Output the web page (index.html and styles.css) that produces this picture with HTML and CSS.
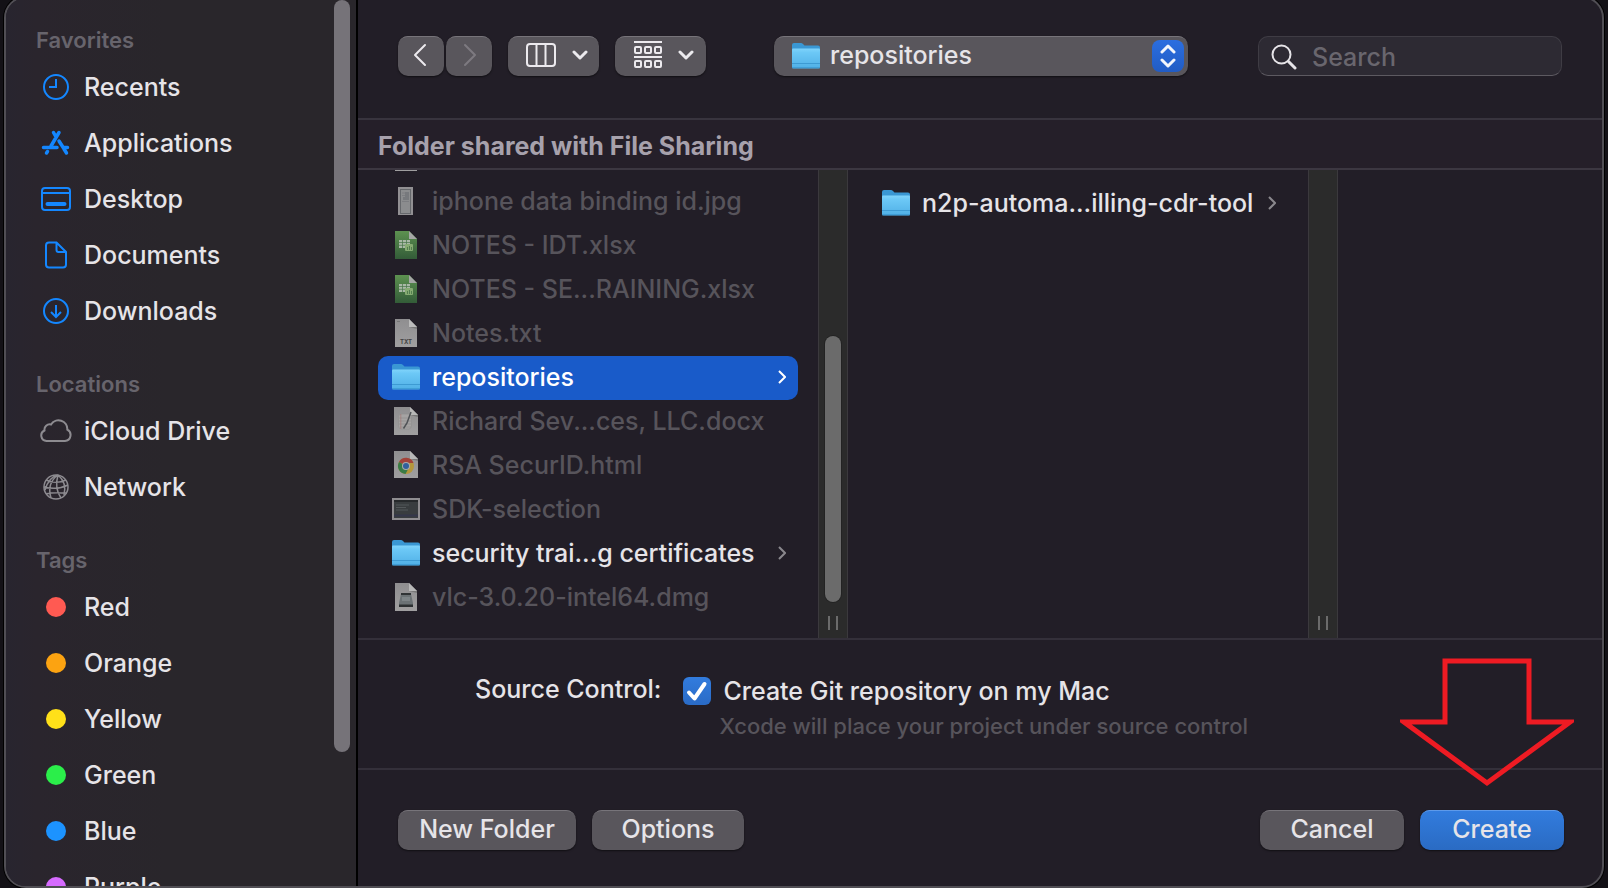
FILE: index.html
```html
<!DOCTYPE html>
<html lang="en">
<head>
<meta charset="utf-8">
<title>Save project</title>
<link rel="stylesheet" href="styles.css">
</head>
<body>
<svg class="defs" aria-hidden="true">
  <defs>
    <linearGradient id="folder-front" x1="0" y1="0" x2="0" y2="1"><stop offset="0" stop-color="#7fd3fb"/><stop offset=".2" stop-color="#6cc8f6"/><stop offset="1" stop-color="#50b0e6"/></linearGradient>
    <linearGradient id="sheet-green" x1="0" y1="0" x2="0" y2="1"><stop offset="0" stop-color="#5d9150"/><stop offset="1" stop-color="#335c38"/></linearGradient>
    <linearGradient id="paper" x1="0" y1="0" x2="0" y2="1"><stop offset="0" stop-color="#8f8e90"/><stop offset="1" stop-color="#a09fa0"/></linearGradient>
    <symbol id="folder" viewBox="0 0 28 28">
      <path d="M0 3q0-2 2-2h7q1 0 2 1l1.500 1.500H26q2 0 2 2V12H0z" fill="#3a97d3"/>
      <path d="M0 7.500q0-1 1-1h26q1 0 1 1V25q0 1.500-1.500 1.500h-25Q0 26.500 0 25z" fill="url(#folder-front)"/>
      <path d="M0 21.500h28M0 25.700h28" stroke="#3d9bd3" stroke-width="1"/>
    </symbol>
    <symbol id="sheet" viewBox="0 0 28 28">
      <path d="M3 0h14l8 8v20H3z" fill="url(#sheet-green)"/><path d="M17 0v8h8z" fill="#a5a7a5"/>
      <path d="M7 9h11v8H7z" fill="#a9b8a6"/><path d="M7 11.500h11M7 14.300h11M10.500 9v8M14.500 9v8" stroke="#467447" stroke-width=".7"/>
      <rect x="13" y="13" width="8" height="7" rx="1" fill="#86ab72"/><path d="M15.500 19v-3M17.500 19v-4M19.500 19v-3" stroke="#467447" stroke-width=".8"/>
    </symbol>
    <symbol id="txt" viewBox="0 0 28 28">
      <path d="M3 0h14l8 8v20H3z" fill="url(#paper)"/><path d="M17 0v8h8z" fill="#bbb"/><path d="M17 8h8v2z" fill="#777"/>
      <path d="M5 2.500h3" stroke="#666" stroke-width=".6"/>
    </symbol>
    <symbol id="phone" viewBox="0 0 28 28">
      <path d="M6 0h15v28H6z" fill="#929093"/><rect x="8.500" y="2.500" width="10" height="24" fill="#8b8c8e" stroke="#66686c"/>
      <path d="M10 6h4M10 8.500h3M10 14.500h7" stroke="#787a7e" stroke-width=".8"/><path d="M13 5h4v8h-6v-3h2z" fill="#77797d"/>
    </symbol>
    <symbol id="docx" viewBox="0 0 28 28">
      <path d="M2 0h16l8 8v20H2z" fill="url(#paper)"/><path d="M18 0v8h8z" fill="#b8b8b8"/><path d="M18 8h8v2z" fill="#777"/>
      <rect x="6.500" y="7" width="13" height="15" rx="3" fill="#a5a3a3" stroke="#918f8f" stroke-width=".7"/><path d="M7 11h12M7 14h12M7 17h12M8 20h11" stroke="#8b8989" stroke-width=".6"/>
      <path d="M8.800 7v15" stroke="#a5706f" stroke-width=".6"/><path d="M19 5l-4 11-3.500 5.500" stroke="#4f5256" stroke-width="1.500"/>
    </symbol>
    <symbol id="chrome" viewBox="0 0 28 28">
      <path d="M2 0h16l8 8v19H2z" fill="url(#paper)"/><path d="M18 0v8h8z" fill="#b8b8b8"/><path d="M18 8h8v2z" fill="#777"/>
      <circle cx="14" cy="15" r="8" fill="#b5973b"/><path d="M14 15L7 11A8 8 0 0 1 21.500 12H14z" fill="#a2423a"/>
      <path d="M7 11a8 8 0 0 0 6.500 12l3.500-6.500-3 .5z" fill="#397b46"/><path d="M7 11l4 6.500 3-2.500z" fill="#397b46"/>
      <circle cx="14" cy="15" r="4" fill="#aaa"/><circle cx="14" cy="15" r="3" fill="#32609d"/>
    </symbol>
    <symbol id="shot" viewBox="0 0 28 28">
      <rect x="1" y="4" width="26" height="20" fill="#393d3f" stroke="#8f8d90" stroke-width="2"/><path d="M2 6h24" stroke="#26292b" stroke-width="2"/>
      <path d="M4 10h13M4 12.500h10M4 15h12" stroke="#53585a" stroke-width="1"/><path d="M2 20.500h24" stroke="#34374a" stroke-width="2"/>
    </symbol>
    <symbol id="dmg" viewBox="0 0 28 28">
      <path d="M3 0h14l8 8v20H3z" fill="url(#paper)"/><path d="M17 0v8h8z" fill="#b8b8b8"/><path d="M17 8h8v2z" fill="#777"/>
      <path d="M9 11h10l2 9v4H7v-4z" fill="#6b7275"/><path d="M9 11h10" stroke="#2f3335" stroke-width="2"/><path d="M7 21.500h14v2.500H7z" fill="#2c3032"/><path d="M10 14h8v4h-8z" fill="#7d8487"/>
    </symbol>
    <symbol id="chev" viewBox="0 0 8 14"><path d="M1 1l6 6-6 6" fill="none" stroke="currentColor" stroke-width="2"/></symbol>
    <symbol id="down" viewBox="0 0 16 12"><path d="M2 3l6 6 6-6" fill="none" stroke="currentColor" stroke-width="3" stroke-linecap="round" stroke-linejoin="round"/></symbol>
  </defs>
</svg>

<main class="window">
  <nav class="sidebar" aria-label="Places">
    <div class="places">
      <section class="group">
        <h2>Favorites</h2>
        <ul>
          <li><a href="#recents"><svg viewBox="0 0 32 32"><circle cx="16" cy="16" r="12"/><path d="M16 8v8H9"/></svg>Recents</a></li>
          <li><a href="#applications"><svg viewBox="0 0 32 32"><path d="M13.500 5.500L15.500 9M19 5.500L11 19M19 14l4.500 7M3.500 20.500H17M23.500 20.500H27.500M7.500 24.500L6.500 26M24 22l2.500 4" stroke-linecap="round" stroke-width="3.500"/></svg>Applications</a></li>
          <li><a href="#desktop"><svg viewBox="0 0 32 32"><rect x="2" y="5" width="28" height="22" rx="3"/><path d="M2 10h28"/><path d="M7.500 21h17" stroke-width="4" stroke-linecap="round"/></svg>Desktop</a></li>
          <li><a href="#documents"><svg viewBox="0 0 32 32"><path d="M16.500 3.500H9a3 3 0 0 0-3 3v19a3 3 0 0 0 3 3h14a3 3 0 0 0 3-3V13zM16.500 3.500V11a2 2 0 0 0 2 2H26"/></svg>Documents</a></li>
          <li><a href="#downloads"><svg viewBox="0 0 32 32"><circle cx="16" cy="16" r="12"/><path d="M16 10v11M11 17l5 5 5-5"/></svg>Downloads</a></li>
        </ul>
      </section>
      <section class="group gray">
        <h2>Locations</h2>
        <ul>
          <li><a href="#icloud"><svg viewBox="0 0 32 32"><path d="M6.500 26H25a6 6 0 0 0 2.300-11.300A8.800 8.800 0 0 0 11 9.500a5.300 5.300 0 0 0-6.500 6A5.500 5.500 0 0 0 6.500 26z"/></svg>iCloud Drive</a></li>
          <li><a href="#network"><svg viewBox="0 0 32 32" class="thin"><circle cx="16" cy="16" r="12"/><path d="M18 4c-7 5-10 13-7 23M18 4c-2 7-2 16 3 23M18 4c6 5 8 12 6 20M18 4C13 5 8 9 5 19M6 9c6 3 14 3 20 0M4 16c8 2 16 2 24-2M6 23c6-2 14-1 21-1"/></svg>Network</a></li>
        </ul>
      </section>
      <section class="group">
        <h2>Tags</h2>
        <ul>
          <li><a href="#red"><i class="dot red"></i>Red</a></li>
          <li><a href="#orange"><i class="dot orange"></i>Orange</a></li>
          <li><a href="#yellow"><i class="dot yellow"></i>Yellow</a></li>
          <li><a href="#green"><i class="dot green"></i>Green</a></li>
          <li><a href="#blue"><i class="dot blue"></i>Blue</a></li>
          <li><a href="#purple"><i class="dot purple"></i>Purple</a></li>
        </ul>
      </section>
    </div>
    <div class="side-thumb"></div>
  </nav>

  <div class="content">
    <header class="toolbar">
      <div class="history">
        <button class="btn" aria-label="Back"><svg class="ic-nav" viewBox="0 0 16 24"><path d="M12 2L2 12l10 10"/></svg></button>
        <button class="btn" aria-label="Forward" disabled><svg class="ic-nav" viewBox="0 0 16 24"><path d="M4 2l10 10L4 22"/></svg></button>
      </div>
      <button class="btn view" aria-label="Column view"><svg class="ic-view" viewBox="0 0 30 28"><rect x="1" y="3" width="28" height="22" rx="3"/><path d="M10.500 3v22M19.500 3v22"/></svg><svg class="ic-down"><use href="#down"/></svg></button>
      <button class="btn view" aria-label="Group items"><svg class="ic-view group-ic" viewBox="0 0 28 28"><path d="M0 1h28M0 16h28"/><g><rect x="1" y="6" width="6" height="6" rx="1"/><rect x="11" y="6" width="6" height="6" rx="1"/><rect x="21" y="6" width="6" height="6" rx="1"/><rect x="1" y="20" width="6" height="6" rx="1"/><rect x="11" y="20" width="6" height="6" rx="1"/><rect x="21" y="20" width="6" height="6" rx="1"/></g></svg><svg class="ic-down"><use href="#down"/></svg></button>
      <div class="popup">
        <svg class="ic-file"><use href="#folder"/></svg>
        <select aria-label="Current folder"><option>repositories</option></select>
        <span class="stepper"><svg viewBox="0 0 16 24"><path d="M2 8l6-6 6 6M2 16l6 6 6-6"/></svg></span>
      </div>
      <label class="search">
        <svg viewBox="0 0 26 26"><circle cx="10.500" cy="10.500" r="9"/><path d="M17.500 17.500L24 24" stroke-width="3"/></svg>
        <input type="search" placeholder="Search" aria-label="Search">
      </label>
    </header>

    <h1 class="banner">Folder shared with File Sharing</h1>

    <div class="columns">
      <ul class="col files">
        <li><button class="row" disabled aria-label="Earlier file"><svg class="ic-file"><use href="#txt"/></svg></button></li>
        <li><button class="row" disabled><svg class="ic-file"><use href="#phone"/></svg><span>iphone data binding id.jpg</span></button></li>
        <li><button class="row" disabled><svg class="ic-file"><use href="#sheet"/></svg><span>NOTES - IDT.xlsx</span></button></li>
        <li><button class="row" disabled><svg class="ic-file"><use href="#sheet"/></svg><span>NOTES - SE...RAINING.xlsx</span></button></li>
        <li><button class="row" disabled><span class="txt-ic"><svg class="ic-file"><use href="#txt"/></svg><small>TXT</small></span><span>Notes.txt</span></button></li>
        <li><button class="row selected"><svg class="ic-file"><use href="#folder"/></svg><span>repositories</span><svg class="ic-chev"><use href="#chev"/></svg></button></li>
        <li><button class="row" disabled><svg class="ic-file"><use href="#docx"/></svg><span>Richard Sev...ces, LLC.docx</span></button></li>
        <li><button class="row" disabled><svg class="ic-file"><use href="#chrome"/></svg><span>RSA SecurID.html</span></button></li>
        <li><button class="row" disabled><svg class="ic-file"><use href="#shot"/></svg><span>SDK-selection</span></button></li>
        <li><button class="row"><svg class="ic-file"><use href="#folder"/></svg><span>security trai...g certificates</span><svg class="ic-chev"><use href="#chev"/></svg></button></li>
        <li><button class="row" disabled><svg class="ic-file"><use href="#dmg"/></svg><span>vlc-3.0.20-intel64.dmg</span></button></li>
      </ul>
      <div class="gutter"><div class="thumb"></div><div class="grip"></div></div>
      <ul class="col">
        <li><button class="row"><svg class="ic-file"><use href="#folder"/></svg><span>n2p-automa...illing-cdr-tool</span><svg class="ic-chev"><use href="#chev"/></svg></button></li>
      </ul>
      <div class="gutter"><div class="grip"></div></div>
      <div class="rest"></div>
    </div>

    <section class="source">
      <span class="source-label">Source Control:</span>
      <div class="source-field">
        <label class="check"><span class="box"><input type="checkbox" checked><svg viewBox="0 0 28 28"><path d="M6 15.500l5.500 6L21.500 7"/></svg></span>Create Git repository on my Mac</label>
        <p>Xcode will place your project under source control</p>
      </div>
    </section>

    <footer class="actions">
      <button class="btn wide">New Folder</button>
      <button class="btn mid">Options</button>
      <span class="space"></span>
      <button class="btn end">Cancel</button>
      <button class="btn end primary">Create</button>
    </footer>
  </div>

  <svg class="arrow" viewBox="0 0 174 130" aria-hidden="true"><path d="M45 3h84v61h41L87 125 4 64h41z"/></svg>
</main>
</body>
</html>
```
FILE: styles.css
```css
* { box-sizing: border-box; }

body {
  margin: 0;
  height: 100vh;
  overflow: hidden;
  background: #131116;
  color: #e6e4e8;
  font: 500 25px/32px Inter, "Liberation Sans", sans-serif;
}

button, input, select { font: inherit; color: inherit; }
button { border: 0; padding: 0; background: none; }
ul { list-style: none; margin: 0; padding: 0; }
svg { display: block; flex: none; fill: none; }
.defs { position: absolute; width: 0; height: 0; }

.window {
  position: relative;
  display: flex;
  height: calc(100vh + 4px);
  margin: -4px 4px 0;
  border: 2px solid #504e54;
  border-radius: 22px;
  box-shadow: 0 0 0 1px #000;
  background: #221e27;
  overflow: hidden;
}

/* Sidebar */
.sidebar {
  display: flex;
  justify-content: space-between;
  width: 352px;
  flex: none;
  padding: 2px 6px 0 0;
  border-right: 2px solid #000;
  background: linear-gradient(90deg, #28252f 0, #2a252d 30px, #29262b 160px);
  overflow: hidden;
}
.places { padding: 23px 0 0 30px; }
.group { margin-bottom: 28px; }
.group h2 {
  margin: 0;
  height: 36px;
  color: #67646c;
  font-size: 22px;
  line-height: 34px;
  font-weight: 600;
}
.group a {
  display: flex;
  align-items: center;
  gap: 12px;
  height: 56px;
  padding-left: 4px;
  color: inherit;
  text-decoration: none;
}
.group a svg { width: 32px; height: 32px; stroke: #1487ff; stroke-width: 2; }
.group.gray a svg { stroke: #8d8b90; }
.group a .thin, .group.gray a .thin { stroke-width: 1.5; }
.dot { width: 20px; height: 20px; margin: 0 6px; border-radius: 50%; }
.red { background: #ff5a52; }
.orange { background: #fca311; }
.yellow { background: #ffe019; }
.green { background: #2bee4a; }
.blue { background: #1c93ff; }
.purple { background: #d66bff; }
.side-thumb { width: 16px; height: 752px; border-radius: 8px; background: #767379; }

/* Content */
.content { display: flex; flex-direction: column; flex: 1; min-width: 0; padding-top: 2px; }

.btn {
  height: 40px;
  border-radius: 10px;
  background: #59565c;
  box-shadow: inset 0 2px 0 -1px #77747a, 0 1px 2px #0008;
  text-align: center;
  line-height: 38px;
  padding-bottom: 2px;
}
.toolbar {
  display: flex;
  align-items: flex-start;
  height: 120px;
  padding: 36px 40px 0;
  border-bottom: 2px solid #38343e;
}
.history { display: flex; gap: 2px; }
.toolbar .btn { display: flex; align-items: center; justify-content: center; width: 46px; padding: 0 0 2px; }
.ic-nav { width: 16px; height: 24px; stroke: #eceaee; stroke-width: 2; stroke-linecap: round; stroke-linejoin: round; }
.btn:disabled .ic-nav { stroke: #7d7a80; }
.toolbar .view { width: 91px; gap: 16px; margin-left: 16px; padding-left: 6px; }
.ic-view { width: 30px; height: 28px; stroke: #eceaee; stroke-width: 2; }
.group-ic { width: 28px; }
.ic-down { width: 16px; height: 12px; color: #eceaee; }
.popup {
  display: flex;
  align-items: center;
  flex: 1;
  min-width: 0;
  height: 40px;
  margin: 0 70px 0 68px;
  padding: 0 4px 0 18px;
  border-radius: 10px;
  background: #59565c;
  box-shadow: inset 0 2px 0 -1px #77747a, 0 1px 2px #0008;
}
.popup select {
  flex: 1;
  min-width: 0;
  height: 38px;
  margin-bottom: 2px;
  padding: 0 0 0 10px;
  border: 0;
  background: none;
  appearance: none;
}
.stepper {
  display: grid;
  place-items: center;
  width: 32px;
  height: 32px;
  border-radius: 8px;
  background: linear-gradient(#2b6ee0, #215cc4);
}
.stepper svg { width: 16px; height: 24px; stroke: #f2f5fb; stroke-width: 3; stroke-linecap: round; stroke-linejoin: round; }
.search {
  display: flex;
  align-items: center;
  gap: 15px;
  width: 304px;
  height: 40px;
  padding: 2px 12px 0;
  border: 1px solid #3f3c44;
  border-bottom-color: #5d5a61;
  border-radius: 10px;
  background: #2d2a33;
}
.search svg { width: 26px; height: 26px; stroke: #e6e4e8; stroke-width: 2; stroke-linecap: round; }
.search input { flex: 1; min-width: 0; padding: 0; border: 0; background: none; outline: 0; }
.search input::placeholder { color: #69666e; opacity: 1; }

.banner {
  height: 50px;
  margin: 0;
  padding-left: 20px;
  border-bottom: 2px solid #3c3741;
  background: #251f29;
  color: #a7a1ac;
  font-size: 25px;
  line-height: 52px;
  font-weight: 700;
}

/* File columns */
.columns { display: flex; flex: 1; min-height: 0; overflow: hidden; }
.col { width: 460px; flex: none; padding: 12px 20px 0; overflow: hidden; }
.files { display: flex; flex-direction: column; justify-content: flex-end; padding: 0 20px 18px; }
.row {
  display: flex;
  align-items: center;
  gap: 12px;
  width: 100%;
  height: 44px;
  padding: 0 12px 2px 14px;
  border-radius: 10px;
  text-align: left;
  white-space: nowrap;
}
.row:disabled { color: #57545b; }
.selected { background: #195bc9; color: #fff; }
.ic-file { width: 28px; height: 28px; }
.ic-chev { width: 8px; height: 14px; margin-left: auto; color: #8a888d; }
.selected .ic-chev { color: #fff; }
.txt-ic { position: relative; }
.txt-ic small {
  position: absolute;
  left: 0;
  right: 0;
  bottom: 1px;
  color: #444;
  font-size: 6px;
  line-height: 8px;
  font-weight: 700;
  text-align: center;
}
.gutter {
  display: flex;
  flex-direction: column;
  align-items: center;
  justify-content: flex-end;
  gap: 14px;
  width: 30px;
  flex: none;
  padding-bottom: 8px;
  border: solid #3b393d;
  border-width: 0 1px;
  background: #2b2b2b;
}
.thumb { width: 16px; height: 266px; border-radius: 8px; background: #6b6b6b; box-shadow: 0 0 0 1px #232323; }
.grip { width: 10px; height: 14px; border: solid #6b6b6b; border-width: 0 2px; }
.rest { flex: 1; }

/* Source control */
.source {
  display: flex;
  gap: 22px;
  height: 132px;
  padding: 34px 0 0 117px;
  border: solid #34303a;
  border-width: 2px 0;
}
.source-label { line-height: 30px; }
.check { display: flex; align-items: center; gap: 12px; line-height: 34px; }
.box { display: grid; width: 28px; height: 28px; }
.box > * { grid-area: 1 / 1; }
.box input {
  width: 28px;
  height: 28px;
  margin: 0;
  appearance: none;
  border-radius: 6px;
  background: linear-gradient(#327cde, #2a6bc6);
}
.box svg { pointer-events: none; stroke: #fff; stroke-width: 4; stroke-linecap: round; stroke-linejoin: round; }
.source-field p { margin: 0; padding-left: 36px; color: #57545b; font-size: 22px; line-height: 36px; }

/* Footer */
.actions { display: flex; gap: 16px; height: 116px; padding: 40px 38px 0 40px; flex: none; }
.wide { width: 178px; }
.mid { width: 152px; }
.end { width: 144px; }
.space { flex: 1; }
.primary { background: linear-gradient(#327cde, #2a6bc3); box-shadow: inset 0 2px 0 -1px #5e9aea, 0 1px 2px #0008; }

.arrow {
  position: absolute;
  right: 28px;
  bottom: 98px;
  width: 174px;
  height: 130px;
  stroke: #ee1b23;
  stroke-width: 5;
  pointer-events: none;
}
```
